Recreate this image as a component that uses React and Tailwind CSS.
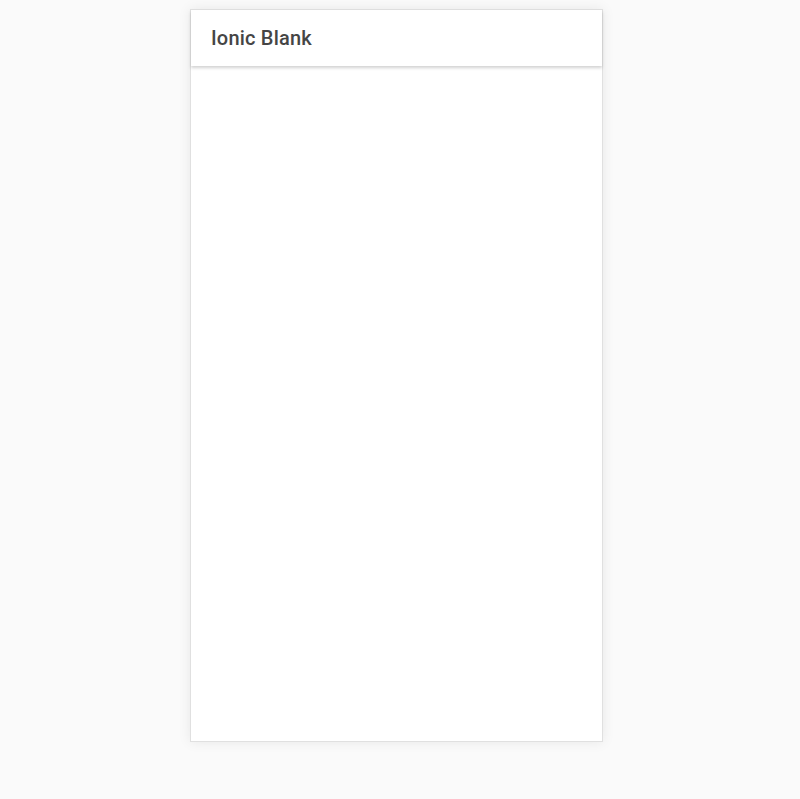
export default function App() {
  return (
    <div className="min-h-screen bg-[#fafafa] pt-[9px] pl-[190px] font-['Roboto',sans-serif]">
      <div className="w-[413px] h-[733px] bg-white border border-[#e0e0e0] shadow-[0_0_12px_rgba(0,0,0,0.08)] flex flex-col">
        <header className="h-[56px] shrink-0 flex items-center px-[20px] shadow-[0_2px_3px_rgba(0,0,0,0.18)] relative z-10">
          <h1 className="text-[20px] font-medium text-[#454545] tracking-[0.01em] antialiased">Ionic Blank</h1>
        </header>
        <main className="flex-1" />
      </div>
    </div>
  );
}
